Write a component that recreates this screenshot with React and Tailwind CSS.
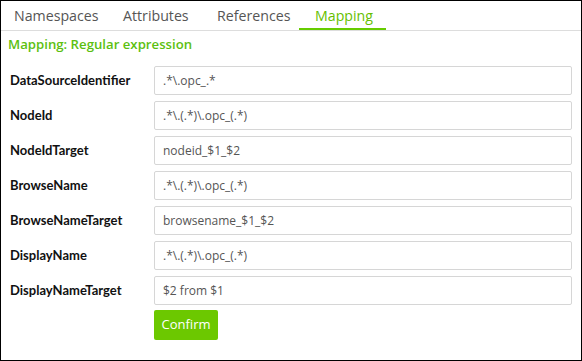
import React from "react";

const rows = [
  ["DataSourceIdentifier", ".*\\.opc_.*"],
  ["NodeId", ".*\\.(.*)\\.opc_(.*)"],
  ["NodeIdTarget", "nodeid_$1_$2"],
  ["BrowseName", ".*\\.(.*)\\.opc_(.*)"],
  ["BrowseNameTarget", "browsename_$1_$2"],
  ["DisplayName", ".*\\.(.*)\\.opc_(.*)"],
  ["DisplayNameTarget", "$2 from $1"],
];

export default function App() {
  return (
    <div
      className="w-[582px] h-[361px] border border-black bg-white overflow-hidden"
      style={{ fontFamily: '"Open Sans", "Noto Sans", sans-serif' }}
    >
      <div className="flex h-[30px] border-b border-[#dddddd] text-[14.2px] text-[#555555]">
        <div className="w-[107px] pl-[13px] leading-[29px]">Namespaces</div>
        <div className="w-[93px] pl-[15px] leading-[29px]">Attributes</div>
        <div className="w-[98px] pl-[16px] leading-[29px]">References</div>
        <div className="w-[87px] pl-[16px] leading-[29px] text-[#66c000] border-b-2 border-[#66cc00]">
          Mapping
        </div>
      </div>
      <div className="pl-[7px] pt-[3px] text-[13.2px] font-semibold text-[#5cbf10] leading-[20px]">
        Mapping: Regular expression
      </div>
      <div className="mt-[12px] flex flex-col gap-[6px]">
        {rows.map(([label, value]) => (
          <div key={label} className="flex items-center">
            <div
              className="w-[153px] pl-[9px] text-[13px] font-bold text-[#111111]"
              style={{ fontFamily: 'Lato, "Open Sans", sans-serif' }}
            >
              {label}
            </div>
            <div className="w-[418px] h-[29px] border border-[#d6d6d6] rounded-[2px] pl-[8px] flex items-center text-[12px] text-[#555555]">
              {value}
            </div>
          </div>
        ))}
      </div>
      <div className="pl-[153px] mt-[5px]">
        <button className="w-[64px] h-[30px] bg-[#6cc800] rounded-[2px] text-white text-[13px]">
          Confirm
        </button>
      </div>
    </div>
  );
}
